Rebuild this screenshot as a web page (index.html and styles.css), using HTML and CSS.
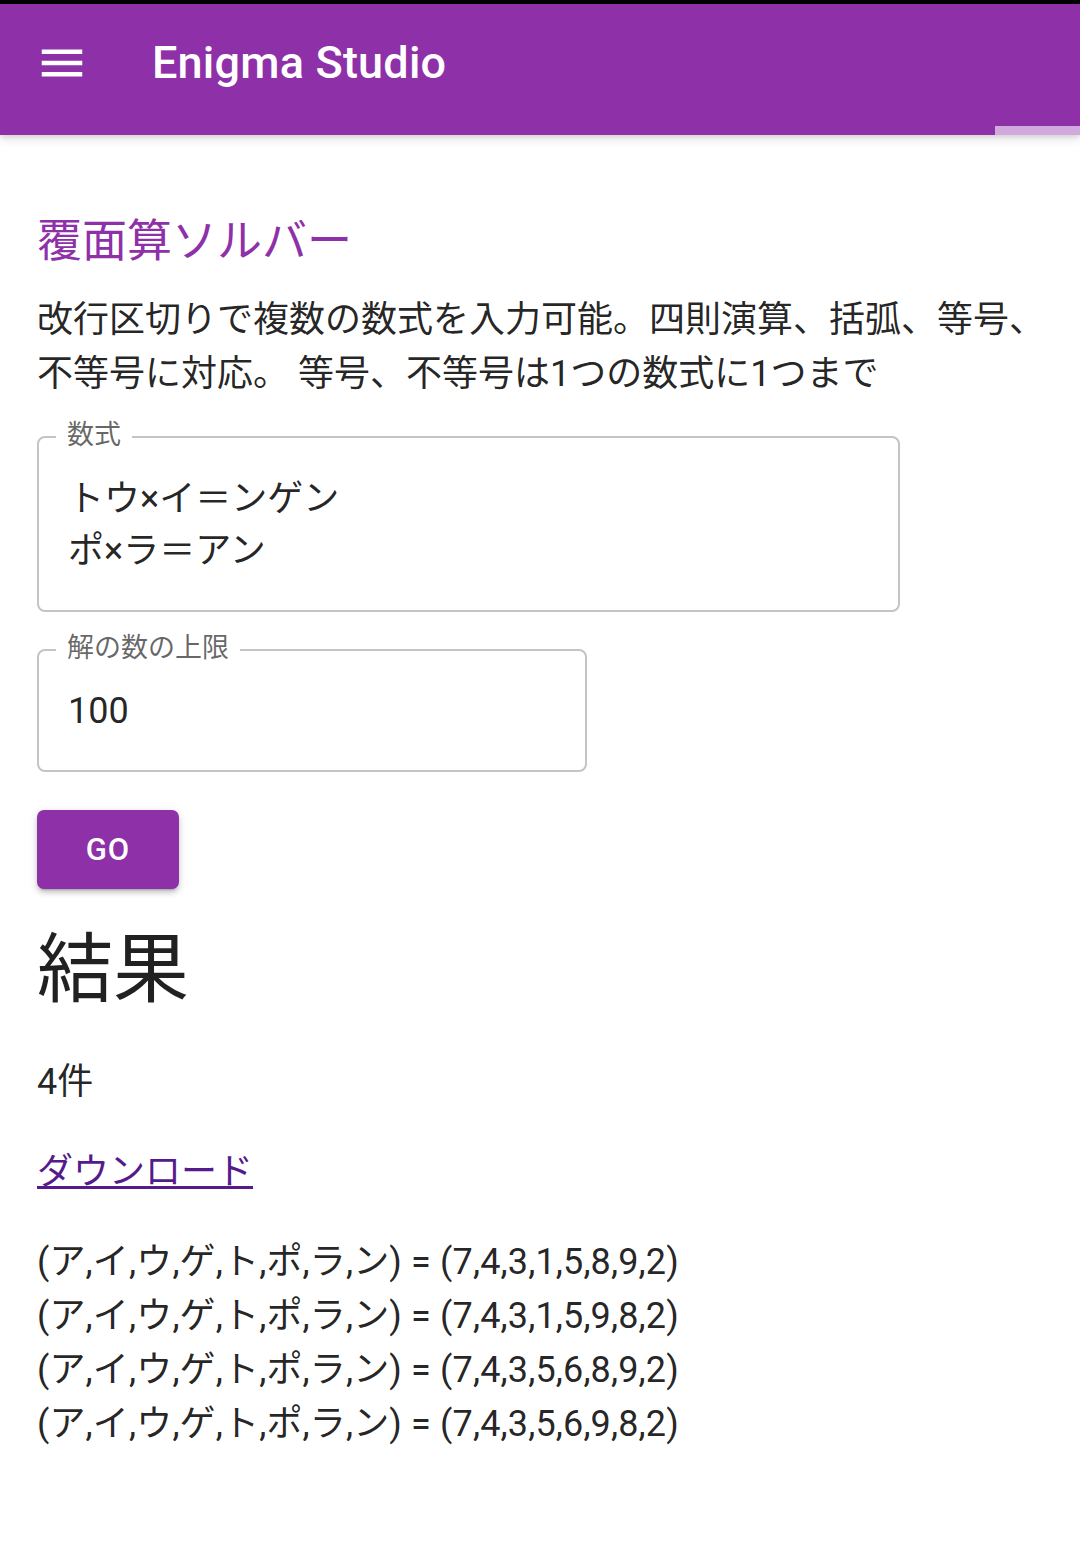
FILE: index.html
```html
<!DOCTYPE html>
<html lang="ja">
<head>
  <meta charset="UTF-8" />
  <title>Enigma Studio</title>
  <link rel="stylesheet" href="styles.css">
</head>
<body>
  <div class="statusbar"></div>

  <header class="appbar">
    <div class="toolbar">
      <button class="menu-btn" title="Menu">
        <svg viewBox="0 0 24 24" width="54" height="54"><path fill="#fff" d="M3 18h18v-2H3v2zm0-5h18v-2H3v2zm0-7v2h18V6H3z"/></svg>
      </button>
      <div class="app-title">Enigma Studio</div>
    </div>
    <div class="progress"><div class="progress-bar"></div></div>
  </header>

  <main class="content">
    <h2 class="page-title">覆面算ソルバー</h2>
    <p class="desc">改行区切りで複数の数式を入力可能。四則演算、括弧、等号、不等号に対応。 等号、不等号は1つの数式に1つまで</p>

    <fieldset class="field field-wide">
      <legend>数式</legend>
      <div class="field-value">トウ×イ＝ンゲン
ポ×ラ＝アン</div>
    </fieldset>

    <fieldset class="field field-narrow">
      <legend>解の数の上限</legend>
      <div class="field-value">100</div>
    </fieldset>

    <button class="go-btn">GO</button>

    <h3 class="result-title">結果</h3>
    <p class="count">4件</p>
    <p class="count"><a href="#" class="download">ダウンロード</a></p>

    <div class="results">
      <div>(ア,イ,ウ,ゲ,ト,ポ,ラ,ン) = (7,4,3,1,5,8,9,2)</div>
      <div>(ア,イ,ウ,ゲ,ト,ポ,ラ,ン) = (7,4,3,1,5,9,8,2)</div>
      <div>(ア,イ,ウ,ゲ,ト,ポ,ラ,ン) = (7,4,3,5,6,8,9,2)</div>
      <div>(ア,イ,ウ,ゲ,ト,ポ,ラ,ン) = (7,4,3,5,6,9,8,2)</div>
    </div>
  </main>
</body>
</html>
```

FILE: styles.css
```css
body {
  margin: 0;
  background-color: #fff;
  color: rgba(0, 0, 0, 0.87);
  font-family: Roboto, "Noto Sans CJK JP", sans-serif;
  font-size: 36px;
  line-height: 54px;
}

.statusbar {
  height: 4px;
  background-color: #000;
}

/* App bar */
.appbar {
  background-color: #8e30a8;
  color: #fff;
  box-shadow: 0 4px 9px rgba(0, 0, 0, 0.12), 0 2px 4px rgba(0, 0, 0, 0.08);
  position: relative;
  z-index: 1;
}

.toolbar {
  height: 118px;
  display: flex;
  align-items: center;
  padding-left: 35px;
}

.menu-btn {
  width: 54px;
  height: 54px;
  padding: 0;
  border: none;
  background: none;
  cursor: pointer;
  display: flex;
}

.app-title {
  margin-left: 63px;
  font-size: 45px;
  font-weight: 500;
  line-height: 54px;
  letter-spacing: 0.2px;
}

.progress {
  margin-top: 4px;
  height: 9px;
  display: flex;
  justify-content: flex-end;
}

.progress-bar {
  width: 85px;
  background-color: #d0aadc;
}

/* Content */
.content {
  padding: 0 15px 60px 37px;
}

.page-title {
  margin: 71px 0 15px 0;
  font-size: 45px;
  font-weight: 400;
  line-height: 72px;
  color: #8e30a8;
}

.desc {
  margin: 0 0 18px 0;
}

.field {
  margin: 0;
  border: 2px solid #c4c4c4;
  border-radius: 8px;
  box-sizing: border-box;
}

.field legend {
  margin-left: -12px;
  padding: 0 11px 4px 11px;
  font-size: 27px;
  line-height: 32px;
  color: rgba(0, 0, 0, 0.6);
}

.field-wide {
  width: 863px;
  padding: 19px 29px 32px 29px;
}

.field-narrow {
  width: 550px;
  margin-top: 20px;
  padding: 18px 29px 33px 29px;
}

.field-value {
  font-size: 36px;
  line-height: 51.75px;
  white-space: pre-line;
  color: rgba(0, 0, 0, 0.87);
}

.go-btn {
  display: block;
  margin-top: 38px;
  width: 142px;
  height: 79px;
  border: none;
  border-radius: 7px;
  background-color: #8e30a8;
  color: #fff;
  font-family: Roboto, sans-serif;
  font-size: 31px;
  font-weight: 500;
  letter-spacing: 1px;
  cursor: pointer;
  box-shadow: 0 3px 2px -2px rgba(0, 0, 0, 0.2), 0 4px 5px 0 rgba(0, 0, 0, 0.14), 0 2px 10px 0 rgba(0, 0, 0, 0.12);
}

.result-title {
  margin: 34px 0 38px 0;
  font-size: 76px;
  font-weight: 400;
  line-height: 94px;
}

.count {
  margin: 0 0 36px 0;
}

.download {
  color: #551a8b;
}

.results {
  line-height: 54px;
  letter-spacing: 0.15px;
}
```
